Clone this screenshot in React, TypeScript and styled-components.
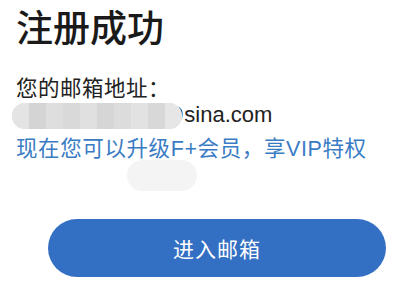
import * as React from "react";
import styled, { createGlobalStyle } from "styled-components";

const GlobalStyle = createGlobalStyle`
  html, body {
    margin: 0;
    padding: 0;
    background: #ffffff;
  }
  body {
    font-family: "Noto Sans CJK SC", "Noto Sans", sans-serif;
    color: #1f1f1f;
  }
`;

const Page = styled.div`
  position: relative;
  width: 400px;
  height: 300px;
  overflow: hidden;
  box-sizing: border-box;
  padding: 4px 16px 0 16px;
  display: flex;
  flex-direction: column;
`;

const Title = styled.h1`
  margin: 0;
  font-size: 37px;
  line-height: 44px;
  font-weight: 500;
  color: #1a1a1a;
`;

const Label = styled.div`
  margin-top: 25px;
  font-size: 21.5px;
  line-height: 28px;
  letter-spacing: 0.5px;
  color: #222;
`;

const EmailLine = styled.div`
  position: relative;
  font-family: "Liberation Sans", "Noto Sans CJK SC", sans-serif;
  font-size: 22px;
  line-height: 28px;
  color: #222;
  padding-left: 146px;
`;

const Mosaic = styled.div`
  position: absolute;
  left: -4px;
  top: 2px;
  width: 170px;
  height: 26px;
  border-radius: 13px;
  overflow: hidden;
  display: flex;
  background: #e6e6e6;
  filter: blur(0.6px);
`;

const Tile = styled.span<{ $shade: string }>`
  flex: 1;
  background: ${(p) => p.$shade};
`;

const Upgrade = styled.div`
  margin-top: 6px;
  font-family: "Liberation Sans", "Noto Sans CJK SC", sans-serif;
  font-size: 21.5px;
  line-height: 28px;
  letter-spacing: 0.6px;
  color: #3a7cc4;
  white-space: nowrap;
`;

const Smudge = styled.div`
  position: absolute;
  left: 127px;
  top: 160px;
  width: 70px;
  height: 31px;
  border-radius: 16px;
  background: #f4f4f4;
`;

const ButtonRow = styled.div`
  margin-top: auto;
  margin-bottom: 23px;
  padding-left: 32px;
`;

const Button = styled.button`
  width: 338px;
  height: 58px;
  border: none;
  border-radius: 29px;
  background: #336fc3;
  color: #ffffff;
  font-family: "Noto Sans CJK SC", "Noto Sans", sans-serif;
  font-size: 21px;
  letter-spacing: 1px;
  cursor: pointer;
`;

const shades = [
  "#e4e4e4",
  "#d4d4d4",
  "#dedede",
  "#d9d9d9",
  "#e0e0e0",
  "#d6d6d6",
  "#dcdcdc",
  "#e2e2e2",
  "#d8d8d8",
  "#e6e6e6",
];

const App: React.FC = () => {
  return (
    <>
      <GlobalStyle />
      <Page>
        <Title>注册成功</Title>
        <Label>您的邮箱地址：</Label>
        <EmailLine>
          @sina.com
          <Mosaic>
            {shades.map((s, i) => (
              <Tile key={i} $shade={s} />
            ))}
          </Mosaic>
        </EmailLine>
        <Upgrade>现在您可以升级F+会员，享VIP特权</Upgrade>
        <Smudge />
        <ButtonRow>
          <Button>进入邮箱</Button>
        </ButtonRow>
      </Page>
    </>
  );
};

export default App;
